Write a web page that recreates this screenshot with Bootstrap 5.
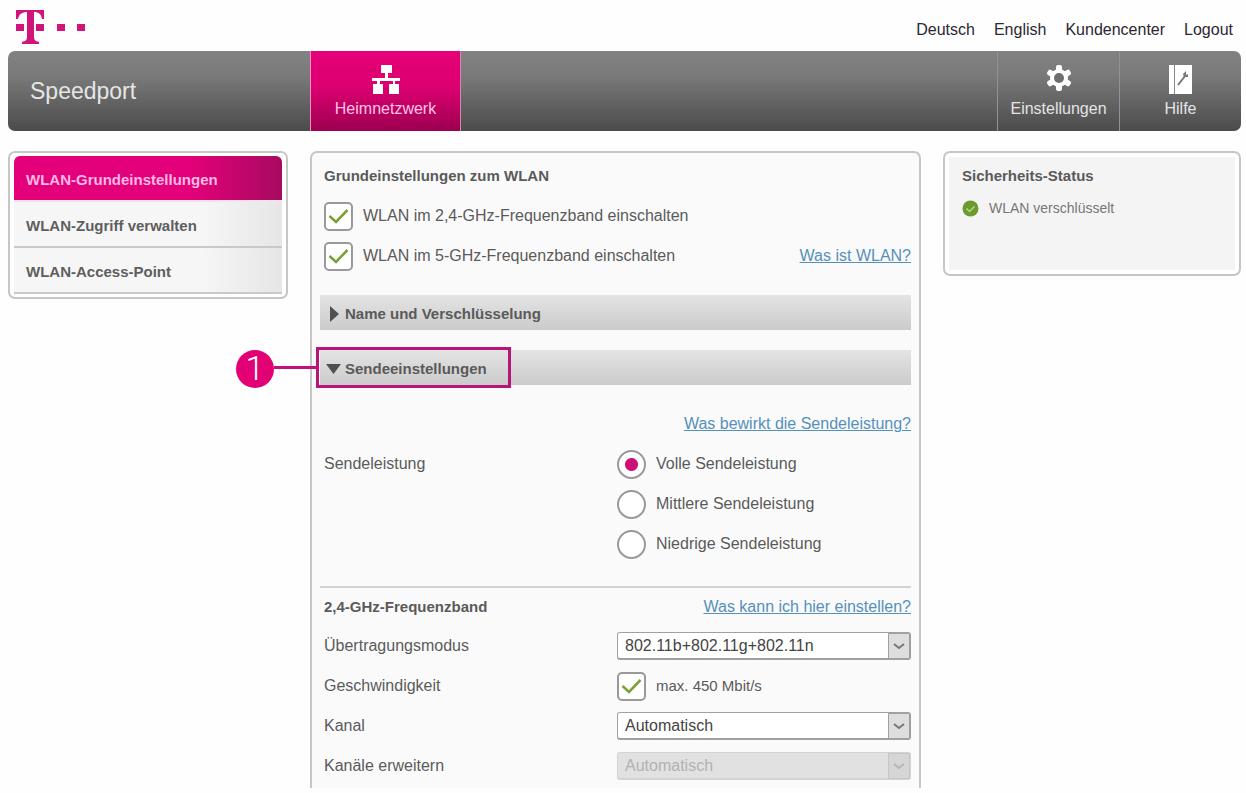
<!DOCTYPE html>
<html lang="de">
<head>
<meta charset="utf-8">
<meta name="viewport" content="width=device-width, initial-scale=1">
<title>Speedport – WLAN-Grundeinstellungen</title>
<link href="https://cdn.jsdelivr.net/npm/bootstrap@5.3.0/dist/css/bootstrap.min.css" rel="stylesheet">
<style>
  :root { --magenta: #e20074; --frame: #c6c6c6; }
  body { font-family: "Liberation Sans", Arial, sans-serif; font-size: 16px; line-height: 20px; color: #5a5a5a; background: #fefefe; }
  .page { padding: 0 5px 5px 8px; }
  .top-row { height: 51px; padding: 9px 8px 0; }
  .top-row nav { gap: 19px; }
  .top-row a { color: #2b2733; text-decoration: none; line-height: 42px; }
  .main-bar { height: 80px; border-radius: 7px; background: linear-gradient(#828282, #7a7a7a 30%, #4b4b4b); overflow: hidden; }
  .brand { width: 302px; padding-left: 22px; font-size: 23px; color: #e6e6e6; text-decoration: none; }
  .tab { color: #e4e4e4; text-decoration: none; display: flex; flex-direction: column; align-items: center; justify-content: flex-end; gap: 4px; padding-bottom: 12px; }
  .tab-home { width: 151px; color: #ffc4e4; background: linear-gradient(#e60077, #dc0071 45%, #9c0050); border-left: 1px solid #f08cc0; border-right: 1px solid #d884ae; }
  .tab-side { width: 122px; border-left: 1px solid #929292; }
  .columns { display: grid; grid-template-columns: 280px minmax(0, 1fr) 298px; gap: 22px; margin-top: 20px; align-items: start; }
  .frame { border: 2px solid var(--frame); border-radius: 7px; background: #fff; }
  .side-menu { padding: 3px 4px; }
  .side-menu a { display: block; height: 46px; line-height: 48px; padding-left: 12px; font-size: 15px; font-weight: 700; color: #5e5e5e; text-decoration: none; border-bottom: 2px solid #c9c9c9; background: linear-gradient(90deg, #f6f6f6 70%, #e6e6e6); }
  .side-menu a.active { color: #ffb9e2; background: linear-gradient(90deg, #e4007a 65%, #a80a60); border-radius: 6px 6px 0 0; border-bottom-color: #f2e4ec; }
  .settings { border-bottom: 0; border-radius: 7px 7px 0 0; background: #fafafa; padding: 3px 8px 2px; }
  .line { min-height: 40px; padding-left: 4px; display: flex; align-items: center; }
  .line h1, .line h2, .status h2 { font-size: 15px; line-height: 20px; font-weight: 700; margin: 0; color: #5a5a5a; }
  .pair { display: grid; grid-template-columns: minmax(0, 1fr) 294px; align-items: center; }
  .help { color: #5590ba; text-decoration: underline; margin-left: auto; }
  .fold { position: relative; height: 35px; margin: 19px 0; background: linear-gradient(#e4e4e4, #cbcbcb); }
  .fold + .fold { margin-top: 20px; }
  .fold button { width: 100%; height: 100%; border: 0; background: none; padding: 2px 0 0 9px; display: flex; align-items: center; gap: 5px; font-weight: 700; font-size: 15px; color: #5a5a5a; text-align: left; }
  .fold button[aria-expanded="true"] { padding-left: 6px; gap: 4px; }
  .tick, .dot { appearance: none; flex: none; width: 29px; height: 29px; margin: 0; border: 2px solid #999; background: #fff center / 25px 25px no-repeat; }
  .tick { border-radius: 5px; }
  .tick:checked { background-image: url("data:image/svg+xml,%3Csvg xmlns='http://www.w3.org/2000/svg' viewBox='0 0 25 25'%3E%3Cpath d='M3.500 12l6.500 6L21.500 6' fill='none' stroke='%237f9f3a' stroke-width='2.600'/%3E%3C/svg%3E"); }
  .dot { border-radius: 50%; }
  .dot:checked { background-image: radial-gradient(circle, #cf0f74 6px, transparent 7px); }
  .option { display: flex; align-items: center; gap: 10px; }
  .speed label { font-size: 15px; }
  .drop { position: relative; }
  .drop select { appearance: none; display: block; width: 100%; height: 28px; border: 1px solid #a0a0a0; border-bottom-width: 2px; border-radius: 3px; background: #fff; padding: 0 30px 0 7px; color: #444; line-height: 20px; opacity: 1; }
  .drop svg { position: absolute; right: 1px; top: 1px; pointer-events: none; }
  .drop select:disabled { background: #e1e1e1; border-color: #d3d3d3; color: #b2b2b2; }
  .status { padding: 4px; }
  .status-body { min-height: 113px; background: #f4f4f4; padding: 9px 13px; }
  .status-body p { font-size: 14px; color: #777; margin: 12px 0 0; display: flex; align-items: center; gap: 10px; }
  .divider { border-top: 2px solid #d2d2d2; margin-top: 22px; }
  .callout { position: absolute; left: -4px; top: -3px; width: 195px; height: 41px; border: 3px solid #b8147a; pointer-events: none; }
  .callout::before { content: ""; position: absolute; right: 100%; top: 16px; width: 45px; height: 3px; background: #c4107c; }
  .callout span { position: absolute; left: -83px; top: 0; width: 38px; height: 38px; border-radius: 50%; background: var(--magenta); color: #fff; text-align: center; font: 300 34px/37px Roboto, sans-serif; }
</style>
</head>
<body>
<div class="page">
  <header>
    <div class="top-row d-flex justify-content-between align-items-start">
      <svg width="72" height="36" viewBox="0 0 72 36" role="img" aria-label="T-Logo">
        <g fill="#d0147a">
          <path d="M0 1h28v9h-2c-1-5-3-7-8-7v24c0 4 1 5 5 6v2H6v-2c4-1 5-2 5-6V3C6 3 3 5 2 10H0z"/>
          <path d="M0 15h8v7H0zM20 15h8v7h-8zM41 15h8v7h-8zM61 15h8v7h-8z"/>
        </g>
      </svg>
      <nav class="d-flex" aria-label="Service">
        <a href="#">Deutsch</a><a href="#">English</a><a href="#">Kundencenter</a><a href="#">Logout</a>
      </nav>
    </div>
    <nav class="main-bar d-flex" aria-label="Hauptmenü">
      <a class="brand d-flex align-items-center" href="#">Speedport</a>
      <a class="tab tab-home" href="#">
        <svg width="28" height="30" viewBox="0 0 28 30" fill="#fff" aria-hidden="true"><path d="M9 0h11v8h-4v5h12v3h-5v3h4v10H17V19h4v-3H8v3h3v10H1V19h4v-3H0v-3h13V8H9z"/></svg>
        <span>Heimnetzwerk</span>
      </a>
      <a class="tab tab-side ms-auto" href="#">
        <svg width="26" height="30" viewBox="-13 -13 26 30" aria-hidden="true"><g fill="#fff"><circle r="9"/><rect x="-3" y="-13" width="6" height="26" rx="2"/><rect x="-3" y="-13" width="6" height="26" rx="2" transform="rotate(60)"/><rect x="-3" y="-13" width="6" height="26" rx="2" transform="rotate(120)"/></g><circle r="5" fill="#6d6d6d"/></svg>
        <span>Einstellungen</span>
      </a>
      <a class="tab tab-side" href="#">
        <svg width="23" height="30" viewBox="0 0 23 30" aria-hidden="true"><path d="M0 0h23v29H0z" fill="#fff"/><path d="M5.500 0v29" stroke="#888"/><path d="M9 20l7-9" stroke="#777" stroke-width="2"/><path d="M17 6l-3 3 1 3 4 0 0-3-2 1z" fill="#777"/></svg>
        <span>Hilfe</span>
      </a>
    </nav>
  </header>

  <div class="columns">
    <nav class="frame side-menu" aria-label="WLAN">
      <a class="active" href="#" aria-current="page">WLAN-Grundeinstellungen</a>
      <a href="#">WLAN-Zugriff verwalten</a>
      <a href="#">WLAN-Access-Point</a>
    </nav>

    <main class="frame settings">
      <div class="line"><h1>Grundeinstellungen zum WLAN</h1></div>
      <div class="line"><div class="option"><input class="tick" type="checkbox" id="w24" checked><label for="w24">WLAN im 2,4-GHz-Frequenzband einschalten</label></div></div>
      <div class="line"><div class="option"><input class="tick" type="checkbox" id="w5" checked><label for="w5">WLAN im 5-GHz-Frequenzband einschalten</label></div><a class="help" href="#">Was ist WLAN?</a></div>

      <div class="fold">
        <button type="button" aria-expanded="false"><svg width="11" height="18" viewBox="0 0 11 18" aria-hidden="true"><path d="M1 1l9 8-9 8z" fill="#505050"/></svg>Name und Verschlüsselung</button>
      </div>
      <div class="fold">
        <button type="button" aria-expanded="true"><svg width="15" height="12" viewBox="0 0 15 12" aria-hidden="true"><path d="M0 1h15l-7.500 10z" fill="#505050"/></svg>Sendeeinstellungen</button>
        <div class="callout"><span>1</span></div>
      </div>

      <div class="line"><a class="help" href="#">Was bewirkt die Sendeleistung?</a></div>
      <div class="pair" role="radiogroup" aria-labelledby="power">
        <div class="line align-self-start" id="power">Sendeleistung</div>
        <div>
          <div class="option line ps-0"><input class="dot" type="radio" name="power" id="p1" checked><label for="p1">Volle Sendeleistung</label></div>
          <div class="option line ps-0"><input class="dot" type="radio" name="power" id="p2"><label for="p2">Mittlere Sendeleistung</label></div>
          <div class="option line ps-0"><input class="dot" type="radio" name="power" id="p3"><label for="p3">Niedrige Sendeleistung</label></div>
        </div>
      </div>

      <div class="line divider"><h2>2,4-GHz-Frequenzband</h2><a class="help" href="#">Was kann ich hier einstellen?</a></div>
      <div class="pair">
        <label class="line" for="mode">Übertragungsmodus</label>
        <div class="drop"><select id="mode"><option>802.11b+802.11g+802.11n</option></select><svg width="22" height="26" viewBox="0 0 22 26" aria-hidden="true"><path d="M.5.5h21v25H.5z" fill="#dedede" stroke="#a0a0a0"/><path d="M6 11l5 4 5-4" fill="none" stroke="#777" stroke-width="2"/></svg></div>
      </div>
      <div class="pair">
        <div class="line">Geschwindigkeit</div>
        <div class="option speed"><input class="tick" type="checkbox" id="speed" checked><label for="speed">max. 450 Mbit/s</label></div>
      </div>
      <div class="pair">
        <label class="line" for="chan">Kanal</label>
        <div class="drop"><select id="chan"><option>Automatisch</option></select><svg width="22" height="26" viewBox="0 0 22 26" aria-hidden="true"><path d="M.5.5h21v25H.5z" fill="#dedede" stroke="#a0a0a0"/><path d="M6 11l5 4 5-4" fill="none" stroke="#777" stroke-width="2"/></svg></div>
      </div>
      <div class="pair">
        <label class="line" for="ext">Kanäle erweitern</label>
        <div class="drop"><select id="ext" disabled><option>Automatisch</option></select><svg width="22" height="26" viewBox="0 0 22 26" aria-hidden="true"><path d="M.5.5h21v25H.5z" fill="#d6d6d6" stroke="#c6c6c6"/><path d="M6 11l5 4 5-4" fill="none" stroke="#b4b4b4" stroke-width="2"/></svg></div>
      </div>
    </main>

    <aside class="frame status">
      <div class="status-body">
        <h2>Sicherheits-Status</h2>
        <p><svg width="17" height="17" viewBox="0 0 17 17" aria-hidden="true"><circle cx="8.500" cy="8.500" r="8" fill="#6a9a30"/><path d="M4.500 8.500l3 3 5-5" fill="none" stroke="#b4d67e" stroke-width="1.500"/></svg>WLAN verschlüsselt</p>
      </div>
    </aside>
  </div>
</div>
<script src="https://cdn.jsdelivr.net/npm/bootstrap@5.3.0/dist/js/bootstrap.bundle.min.js"></script>
</body>
</html>
